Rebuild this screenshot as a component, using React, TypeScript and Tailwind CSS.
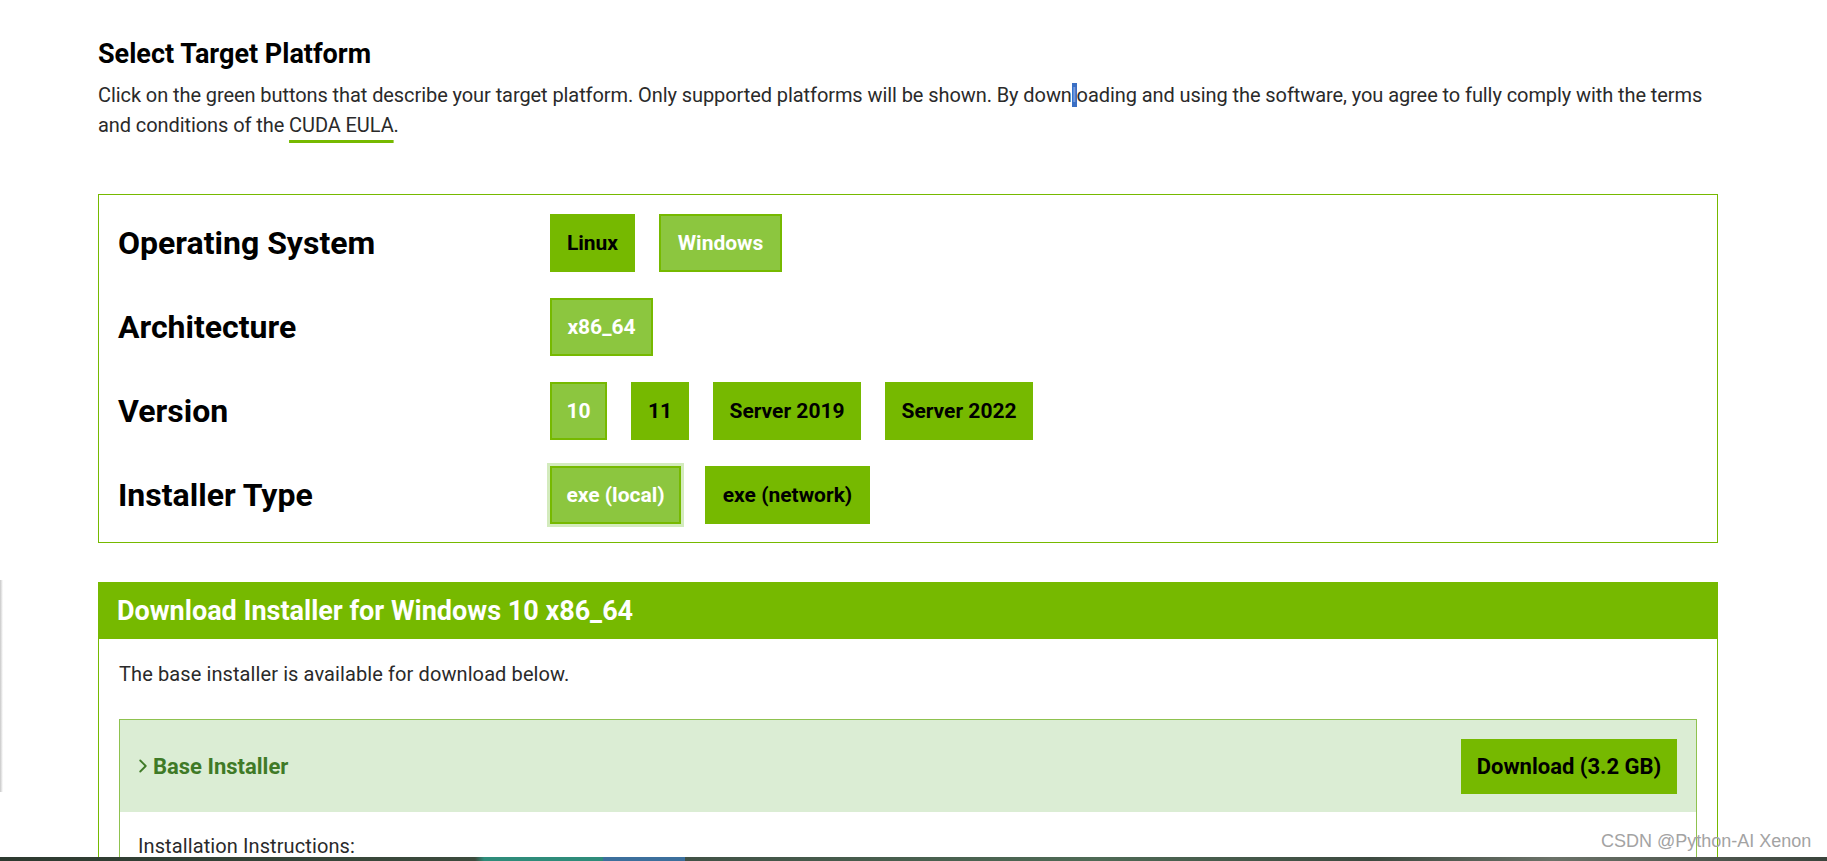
import { ChevronRight } from "lucide-react";

type Opt = { label: string; w: string; selected?: boolean; focus?: boolean };

const ROWS: { title: string; options: Opt[] }[] = [
  {
    title: "Operating System",
    options: [
      { label: "Linux", w: "w-[85px]" },
      { label: "Windows", w: "w-[123px]", selected: true },
    ],
  },
  {
    title: "Architecture",
    options: [{ label: "x86_64", w: "w-[103px]", selected: true }],
  },
  {
    title: "Version",
    options: [
      { label: "10", w: "w-[57px]", selected: true },
      { label: "11", w: "w-[58px]" },
      { label: "Server 2019", w: "w-[148px]" },
      { label: "Server 2022", w: "w-[148px]" },
    ],
  },
  {
    title: "Installer Type",
    options: [
      { label: "exe (local)", w: "w-[131px]", selected: true, focus: true },
      { label: "exe (network)", w: "w-[165px]" },
    ],
  },
];

function OptionButton({ opt }: { opt: Opt }) {
  const base =
    "h-[58px] flex items-center justify-center text-[21px] font-bold leading-none whitespace-nowrap";
  const look = opt.selected
    ? "bg-[#8cc63f] border-2 border-[#76b900] text-white"
    : "bg-[#76b900] text-black";
  const ring = opt.focus ? "ring-[3px] ring-[#d3ebbd]" : "";
  return (
    <button className={`${base} ${opt.w} ${look} ${ring}`}>{opt.label}</button>
  );
}

export default function App() {
  return (
    <div className="relative h-screen overflow-hidden bg-white font-['Roboto',sans-serif] text-black">
      <div className="ml-[98px] w-[1620px] pt-[38px]">
        <h2 className="text-[27px] font-bold leading-[32px]">Select Target Platform</h2>
        <p className="mt-[10px] text-[20px] leading-[30px] tracking-[-0.08px] text-[#2a2a2a]">
          Click on the green buttons that describe your target platform. Only supported platforms will be shown. By down
          <span className="bg-[#3a6fc4] text-[#7a9de0]">l</span>oading and using the software, you agree to fully comply with
          the terms and conditions of the{" "}
          <a className="underline decoration-[#76b900] decoration-[3px] underline-offset-[8px]">CUDA EULA</a>.
        </p>

        {/* platform selector */}
        <div className="mt-[54px] border border-[#76b900] pl-[19px] pt-[19px] pb-[18px]">
          <div className="flex flex-col gap-[26px]">
            {ROWS.map((row) => (
              <div key={row.title} className="flex items-center">
                <div className="w-[432px] text-[32px] font-bold leading-none">{row.title}</div>
                <div className="flex gap-[24px]">
                  {row.options.map((o) => (
                    <OptionButton key={o.label} opt={o} />
                  ))}
                </div>
              </div>
            ))}
          </div>
        </div>

        {/* download panel */}
        <div className="mt-[39px] border border-[#76b900]">
          <div className="flex h-[56px] items-center bg-[#76b900] pl-[18px] text-[27px] font-bold text-white">
            Download Installer for Windows 10 x86_64
          </div>
          <div className="px-[20px] pt-[20px] pb-[40px]">
            <p className="text-[20px] leading-[30px] tracking-[0.1px] text-[#2a2a2a]">
              The base installer is available for download below.
            </p>
            <div className="mt-[30px] border border-[#8fc24f]">
              <div className="flex h-[92px] items-center justify-between bg-[#dbedd4] pl-[12px] pr-[19px]">
                <div className="flex items-center text-[22px] font-bold text-[#3f7a27]">
                  <ChevronRight size={22} strokeWidth={2} className="-mr-[1px]" />
                  Base Installer
                </div>
                <button className="flex h-[55px] w-[216px] items-center justify-center bg-[#76b900] text-[22px] font-bold text-black">
                  Download (3.2 GB)
                </button>
              </div>
              <div className="pl-[18px] pt-[19px] pb-[30px] text-[20px] leading-[30px] tracking-[0.1px] text-[#2a2a2a]">
                Installation Instructions:
              </div>
            </div>
          </div>
        </div>
      </div>

      {/* window edge shadow */}
      <div className="absolute left-0 top-[580px] h-[212px] w-[3px] bg-gradient-to-r from-[#c8c8c8] to-transparent" />

      {/* watermark */}
      <div className="absolute left-[1601px] top-[829px] font-['Liberation_Sans',sans-serif] text-[18px] leading-[24px] text-[#a3a3a3]">
        CSDN @Python-AI Xenon
      </div>

      {/* desktop strip */}
      <div className="fixed bottom-0 left-0 h-[4px] w-full bg-[linear-gradient(90deg,#2d3a30_0%,#3c4b3d_26%,#2e8c7a_26.5%,#2e8c7a_33%,#3c6f9c_33%,#3c6f9c_37.5%,#415246_37.5%,#4e6a55_60%,#3d4a40_75%,#6b7268_85%,#3a443c_100%)]" />
    </div>
  );
}
